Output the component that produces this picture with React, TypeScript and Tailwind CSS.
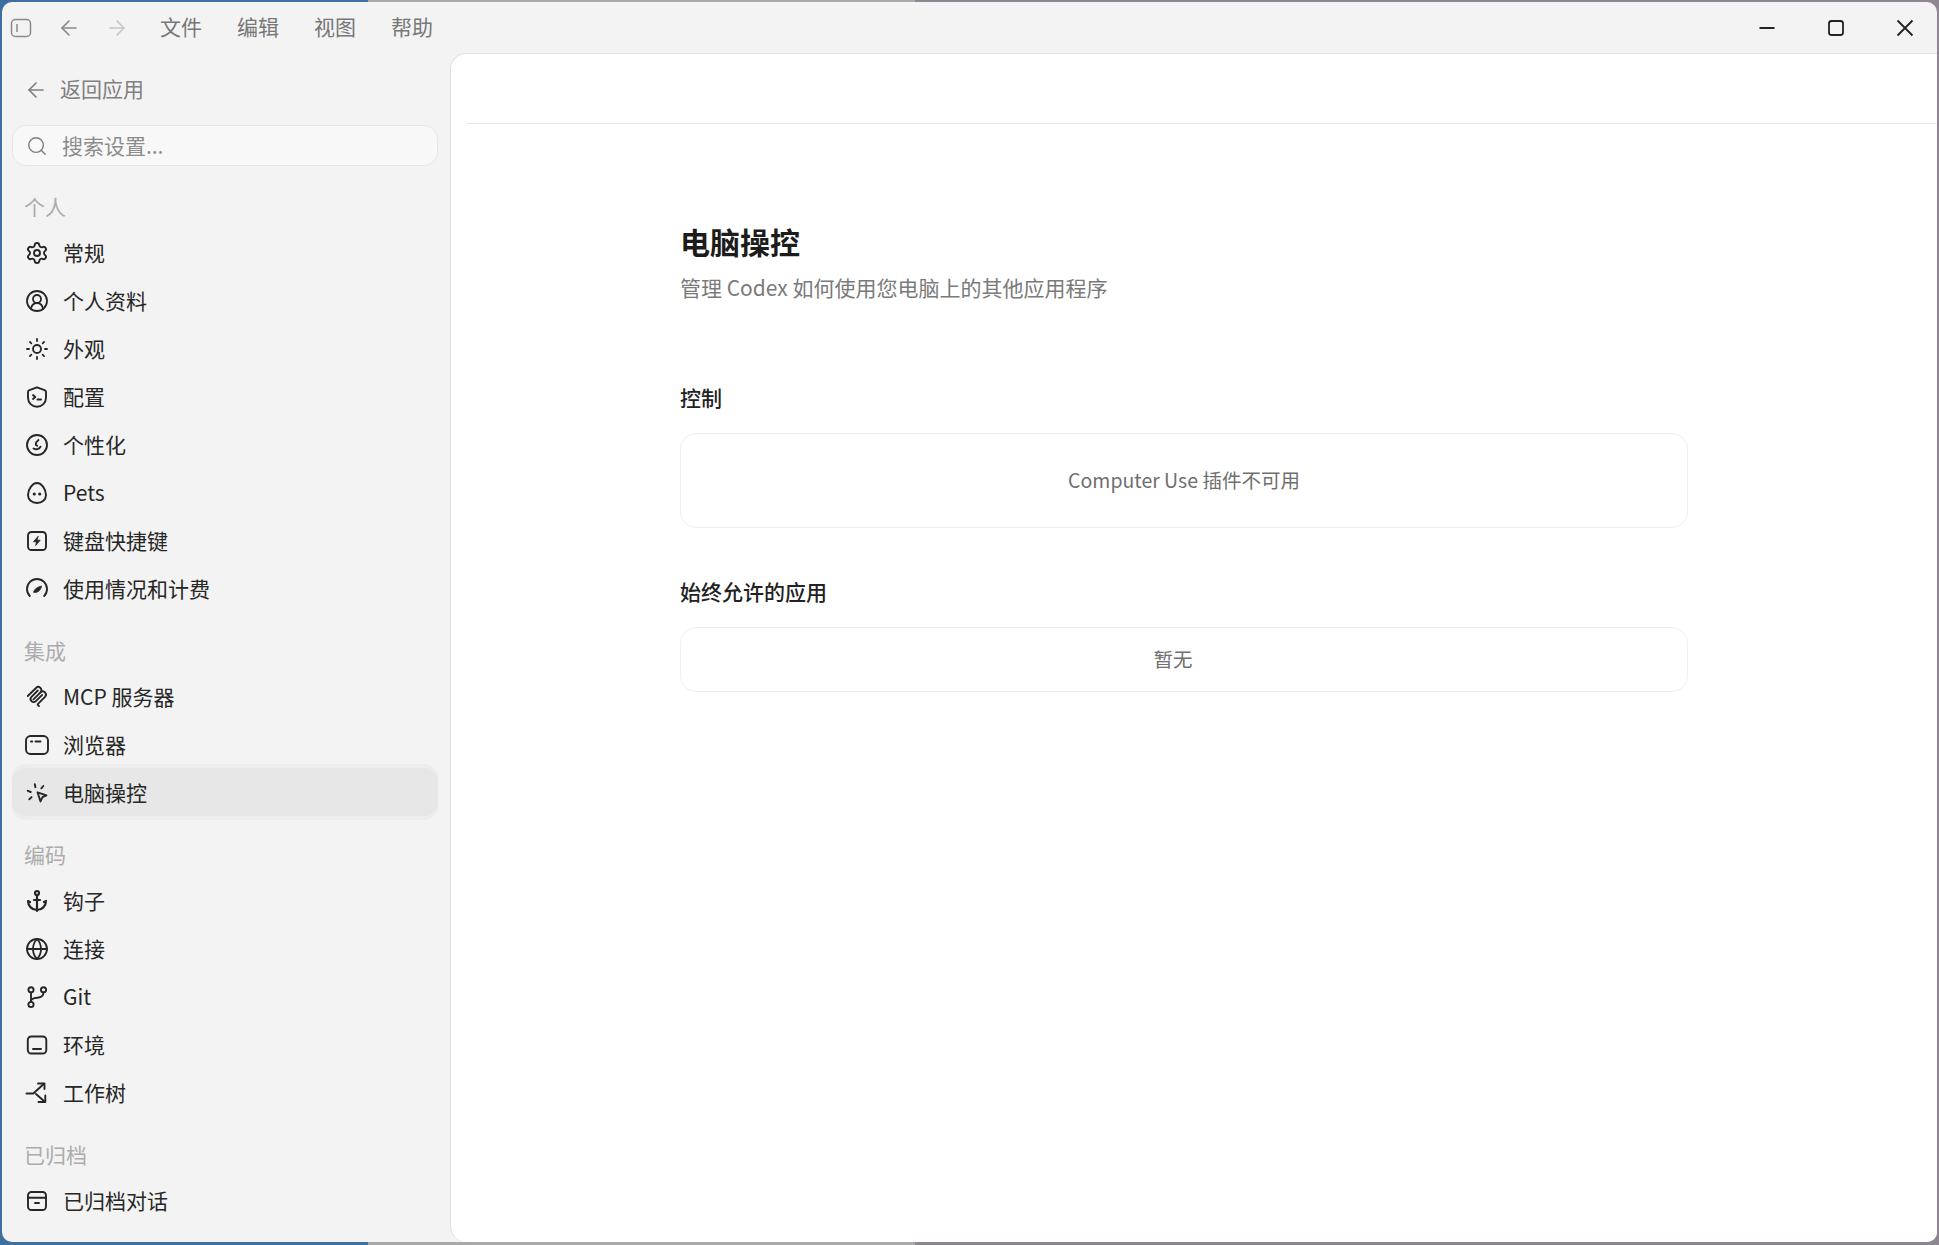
import type { ReactNode } from "react";
import { Anchor, ArrowLeft, ArrowRight, CircleUserRound, Globe, Search, Settings, Sun } from "lucide-react";

// Line icons drawn on a 24px grid, same stroke as the lucide ones
function Glyph({ children }: { children: ReactNode }) {
  return (
    <svg width="24" height="24" viewBox="0 0 24 24" fill="none" stroke="currentColor" strokeWidth="1.9" strokeLinecap="round" strokeLinejoin="round">
      {children}
    </svg>
  );
}

const icons: Record<string, ReactNode> = {
  general: <Settings size={24} strokeWidth={1.9} />,
  profile: <CircleUserRound size={24} strokeWidth={1.8} />,
  appearance: <Sun size={26} strokeWidth={1.8} />,
  config: (
    <Glyph>
      <path d="M12 2.3l7.6 2.9c.8.3 1.4 1 1.4 1.9v5.6c0 5-4 9-9 9s-9-4-9-9V7.100c0-.9.6-1.600 1.400-1.900z" />
      <path d="M8 10l2.300 2L8 14" />
      <path d="M12.500 14.500h3.500" />
    </Glyph>
  ),
  personal: (
    <Glyph>
      <circle cx="12" cy="12" r="10" />
      <path d="M13.500 7c-1.500 1.200-2.800 2.800-2.800 4.300 0 .9.700 1.300 1.500 1.400" />
      <path d="M8.500 15.500c2.500 1.500 5.500.9 7-1.800" />
    </Glyph>
  ),
  pets: (
    <Glyph>
      <path d="M12 2c4.600 0 9 6.300 9 12 0 4.700-3.900 8-9 8s-9-3.300-9-8C3 8.300 7.400 2 12 2z" />
      <circle cx="9.300" cy="13" r="1.600" fill="currentColor" stroke="none" />
      <circle cx="14.700" cy="13" r="1.600" fill="currentColor" stroke="none" />
    </Glyph>
  ),
  shortcuts: (
    <Glyph>
      <rect x="3" y="3" width="18" height="18" rx="3.500" />
      <path d="M13 7.500l-4.500 5.300h3l-.8 3.700 4.500-5.300h-3z" fill="currentColor" strokeWidth="0.8" />
    </Glyph>
  ),
  usage: (
    <Glyph>
      <path d="M4.800 19A10 10 0 1 1 19.200 19" />
      <path d="M8.600 15c.8-3 3.700-5.100 8-6-.8 3.700-2.800 6-5.700 6.500z" fill="currentColor" strokeWidth="0.8" />
    </Glyph>
  ),
  mcp: (
    <Glyph>
      <path d="M2.800 11L11 3a3.100 3.100 0 0 1 4.500 4.400l-7 7" />
      <path d="M15.500 7.400A3.100 3.100 0 0 1 20 11.800l-7 7a.9.900 0 0 0 0 1.300l1 1" />
      <path d="M12.800 5.500L6.500 11.800a3.100 3.100 0 0 0 4.400 4.400l6.300-6.300" />
    </Glyph>
  ),
  browser: (
    <Glyph>
      <rect x="1" y="3" width="22" height="18" rx="4.500" />
      <path d="M6 8.500h1.200" />
      <path d="M10.500 8.500h5" />
    </Glyph>
  ),
  computer: (
    <Glyph>
      <path d="M12.500 11.300l9 3-4 1.900-2 4.200z" />
      <path d="M2.800 9.800l3 1.200" />
      <path d="M9.800 3.200l.6 3" />
      <path d="M18.300 5l-2 2.300" />
      <path d="M4.300 18.300l2.300-2.200" />
    </Glyph>
  ),
  hooks: <Anchor size={24} strokeWidth={2.2} />,
  connections: <Globe size={24} strokeWidth={1.8} />,
  git: (
    <Glyph>
      <circle cx="6" cy="4.800" r="2.600" />
      <circle cx="6" cy="19.500" r="2.600" />
      <circle cx="18.500" cy="4.800" r="2.600" />
      <path d="M6 7.400v9.500" />
      <path d="M18.500 7.400c0 3.200-2.500 4.900-6 5.300-3.700.4-6.500 1-6.500 3" />
    </Glyph>
  ),
  environment: (
    <Glyph>
      <rect x="2.800" y="3.500" width="18.500" height="17" rx="3.500" />
      <path d="M8 16h8" />
    </Glyph>
  ),
  worktree: (
    <Glyph>
      <path d="M1.500 12.500h6.800L19 2.800" />
      <path d="M13 2.500h6.500V8" />
      <path d="M11 13l8.500 7.500" />
      <path d="M20.300 14.500v6.500H13.500" />
    </Glyph>
  ),
  archive: (
    <Glyph>
      <rect x="3" y="3" width="18" height="18" rx="3.500" />
      <path d="M3 8.800h18" />
      <path d="M10 14h4" />
    </Glyph>
  ),
};

const sections = [
  {
    title: "个人",
    items: [
      ["general", "常规"],
      ["profile", "个人资料"],
      ["appearance", "外观"],
      ["config", "配置"],
      ["personal", "个性化"],
      ["pets", "Pets"],
      ["shortcuts", "键盘快捷键"],
      ["usage", "使用情况和计费"],
    ],
  },
  {
    title: "集成",
    items: [
      ["mcp", "MCP 服务器"],
      ["browser", "浏览器"],
      ["computer", "电脑操控"],
    ],
  },
  {
    title: "编码",
    items: [
      ["hooks", "钩子"],
      ["connections", "连接"],
      ["git", "Git"],
      ["environment", "环境"],
      ["worktree", "工作树"],
    ],
  },
  {
    title: "已归档",
    items: [["archive", "已归档对话"]],
  },
];

function TitleBar() {
  return (
    <div className="flex h-[51px] shrink-0 items-center pr-5 pl-[7px]">
      <div className="flex items-center gap-6 text-[#8a8a8a]">
        <svg width="24" height="24" viewBox="0 0 24 24" fill="none" stroke="currentColor" strokeWidth="1.500">
          <rect x="2.500" y="3.500" width="19" height="17" rx="4" />
          <path d="M8 8v8" />
        </svg>
        <ArrowLeft size={24} strokeWidth={1.700} />
        <ArrowRight size={24} strokeWidth={1.700} className="text-[#c6c6c6]" />
      </div>
      <div className="ml-[31px] flex gap-[35px] pb-[2px] text-[#777777]">
        <span>文件</span>
        <span>编辑</span>
        <span>视图</span>
        <span>帮助</span>
      </div>
      <div className="ml-auto flex gap-[45px] text-[#222222]">
        <svg width="24" height="24" viewBox="0 0 24 24" stroke="currentColor" strokeWidth="1.800">
          <path d="M4.500 12h15" />
        </svg>
        <svg width="24" height="24" viewBox="0 0 24 24" fill="none" stroke="currentColor" strokeWidth="1.800">
          <rect x="5" y="5" width="14" height="14" rx="2.500" />
        </svg>
        <svg width="24" height="24" viewBox="0 0 24 24" stroke="currentColor" strokeWidth="1.800">
          <path d="M4.500 4.500l15 15M19.500 4.500l-15 15" />
        </svg>
      </div>
    </div>
  );
}

function Sidebar() {
  return (
    <aside className="flex w-[448px] shrink-0 flex-col pr-3 pl-[10px]">
      <div className="mt-[13px] flex h-12 items-center gap-3 pl-3 text-[#808080]">
        <ArrowLeft size={24} strokeWidth={1.700} />
        <span className="pb-[2px]">返回应用</span>
      </div>
      <div className="mt-[11px] flex h-[41px] items-center gap-[14px] rounded-[14px] border border-[#e6e6e6] bg-[#f8f8f8] pl-[13px]">
        <Search size={24} strokeWidth={1.600} className="text-[#7f7f7f]" />
        <input
          placeholder="搜索设置..."
          className="w-full bg-transparent text-[21px] outline-none placeholder:text-[#8c8c8c]"
        />
      </div>
      <nav className="mt-[2px]">
        {sections.map((section) => (
          <div key={section.title} className="mt-5">
            <div className="flex h-10 items-center pb-[2px] pl-3 text-[#acacac]">{section.title}</div>
            {section.items.map(([icon, label]) => (
              <div
                key={label}
                className={
                  icon === "computer"
                    ? "flex h-12 items-center gap-[14px] rounded-[14px] bg-[#e7e7e7] pt-px pl-[13px] text-[#262626] shadow-[0_-4px_0_0_#ececec,0_4px_0_0_#ececec]"
                    : "flex h-12 items-center gap-[14px] pt-px pl-[13px] text-[#262626]"
                }
              >
                <span className="flex h-6 w-6 items-center justify-center">{icons[icon]}</span>
                <span>{label}</span>
              </div>
            ))}
          </div>
        ))}
      </nav>
    </aside>
  );
}

function Placeholder({ className, children }: { className: string; children: ReactNode }) {
  return (
    <div className={`flex items-center justify-center rounded-2xl border border-[#efefef] pb-[2px] text-[19.500px] text-[#6f6f6f] ${className}`}>
      {children}
    </div>
  );
}

export default function App() {
  return (
    <div className="h-screen overflow-hidden bg-[linear-gradient(90deg,#3f6f9f_368px,#a9a9a9_368px,#a9a9a9_915px,#8e8791_915px)] pt-[2px] pr-[2px] pb-[3px] pl-[2px] font-['Noto_Sans_CJK_SC','Noto_Sans',sans-serif] text-[21px]">
      <div className="flex h-full flex-col overflow-hidden rounded-[10px] bg-[#f3f3f3]">
        <TitleBar />
        <div className="flex min-h-0 flex-1">
          <Sidebar />
          <main className="flex-1 rounded-l-2xl border-t border-l border-[#e0e0e0] bg-white">
            <div className="ml-[15px] h-[70px] border-b border-[#e8e8e8]" />
            <div className="ml-[229px] w-[1008px] pt-[97px]">
              <h1 className="text-[30px] leading-10 font-semibold text-[#1c1c1c]">电脑操控</h1>
              <p className="mt-[11px] leading-[30px] text-[#7a7a7a]">管理 Codex 如何使用您电脑上的其他应用程序</p>
              <h2 className="mt-20 leading-[30px] font-medium text-[#222222]">控制</h2>
              <Placeholder className="mt-[21px] h-[95px]">Computer Use 插件不可用</Placeholder>
              <h2 className="mt-12 leading-[30px] font-medium text-[#222222]">始终允许的应用</h2>
              <Placeholder className="mt-[21px] h-[65px] pr-[22px]">暂无</Placeholder>
            </div>
          </main>
        </div>
      </div>
    </div>
  );
}
